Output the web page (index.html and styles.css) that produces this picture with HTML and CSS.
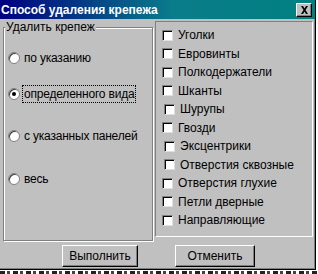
FILE: index.html
```html
<!DOCTYPE html>
<html lang="ru">
<head>
    <meta charset="UTF-8">
    <title>Способ удаления крепежа</title>
    <link rel="stylesheet" href="styles.css">
</head>
<body>
    <div class="window">
        <div class="titlebar">
            <span class="title">Способ удаления крепежа</span>
            <span class="close">
                <svg width="9" height="8" viewBox="0 0 9 8">
                    <path d="M1 0h2l1.5 2.5L6 0h2L5.5 4 8 8H6L4.5 5.5 3 8H1l2.5-4z" fill="#000"/>
                </svg>
            </span>
        </div>

        <div class="content">
            <div class="group">
                <div class="group-label">Удалить крепеж</div>
                <div class="radios">
                    <div class="radio-row"><span class="radio"></span><span>по указанию</span></div>
                    <div class="radio-row"><span class="radio checked"></span><span class="focus">определенного вида</span></div>
                    <div class="radio-row"><span class="radio"></span><span>с указанных панелей</span></div>
                    <div class="radio-row"><span class="radio"></span><span>весь</span></div>
                </div>
            </div>

            <div class="list">
                <div class="check-row"><span class="box"></span>Уголки</div>
                <div class="check-row"><span class="box"></span>Евровинты</div>
                <div class="check-row"><span class="box"></span>Полкодержатели</div>
                <div class="check-row"><span class="box"></span>Шканты</div>
                <div class="check-row shifted"><span class="box"></span>Шурупы</div>
                <div class="check-row"><span class="box"></span>Гвозди</div>
                <div class="check-row shifted"><span class="box"></span>Эксцентрики</div>
                <div class="check-row shifted"><span class="box"></span>Отверстия сквозные</div>
                <div class="check-row"><span class="box"></span>Отверстия глухие</div>
                <div class="check-row"><span class="box"></span>Петли дверные</div>
                <div class="check-row"><span class="box"></span>Направляющие</div>
            </div>
        </div>

        <div class="buttons">
            <button class="btn btn-run">Выполнить</button>
            <button class="btn btn-cancel">Отменить</button>
        </div>
    </div>
    <div class="below"></div>
</body>
</html>
```

FILE: styles.css
```css
body {
    margin: 0;
    background: #fff;
    font-family: 'Liberation Sans', Arial, sans-serif;
    font-size: 12px;
    color: #000;
    width: 318px;
    height: 274px;
    overflow: hidden;
}

.window {
    width: 316px;
    height: 270px;
    box-sizing: border-box;
    background: #c0c0c0;
    border-right: 1px solid #000;
    border-bottom: 1px solid #000;
    box-shadow: inset -1px -1px 0 #808080;
}

.titlebar {
    height: 19px;
    background: linear-gradient(to right, #000080, #0a7d8a 55%, #008080);
    display: flex;
    align-items: center;
    justify-content: space-between;
    padding: 0 3px 0 1px;
}

.title {
    color: #fff;
    font-weight: bold;
    font-size: 12px;
}

.close {
    width: 16px;
    height: 14px;
    box-sizing: border-box;
    background: #c0c0c0;
    border-top: 1px solid #fff;
    border-left: 1px solid #fff;
    border-right: 1px solid #000;
    border-bottom: 1px solid #000;
    box-shadow: inset -1px -1px 0 #808080;
    display: flex;
    align-items: center;
    justify-content: center;
}

.content {
    display: flex;
    gap: 2px;
    padding: 2px 2px 0 3px;
}

.group {
    width: 150px;
    height: 214px;
    box-sizing: border-box;
    border: 1px solid #808080;
    box-shadow: 1px 1px 0 #fff, inset 1px 1px 0 #fff;
    position: relative;
    margin-top: 6px;
}

.group-label {
    position: absolute;
    top: -7px;
    left: 1px;
    background: #c0c0c0;
    padding: 0 1px;
    line-height: 13px;
}

.radios {
    display: flex;
    flex-direction: column;
    padding: 23px 0 0 4px;
    letter-spacing: -0.2px;
}

.radio-row {
    display: flex;
    align-items: center;
    gap: 4px;
    height: 14px;
    margin-bottom: 22px;
}

.radio-row:nth-child(2) {
    margin-bottom: 28px;
}

.radio-row:nth-child(3) {
    margin-bottom: 29px;
}

.radio {
    width: 10px;
    height: 10px;
    border-radius: 50%;
    background: #fff;
    border: 1px solid #808080;
    box-shadow: inset 1px 1px 0 #404040;
    position: relative;
}

.radio.checked::after {
    content: '';
    position: absolute;
    left: 3px;
    top: 3px;
    width: 4px;
    height: 4px;
    border-radius: 50%;
    background: #000;
}

.focus {
    outline: 1px dotted #000;
    outline-offset: 1px;
}

.list {
    width: 158px;
    height: 216px;
    box-sizing: border-box;
    border-top: 1px solid #808080;
    border-left: 1px solid #808080;
    border-right: 1px solid #fff;
    border-bottom: 1px solid #fff;
    padding: 4px 0 0 6px;
}

.check-row {
    display: flex;
    align-items: center;
    gap: 5px;
    height: 18.5px;
}

.check-row.shifted {
    padding-left: 2px;
}

.box {
    width: 11px;
    height: 11px;
    box-sizing: border-box;
    background: #fff;
    border-top: 1px solid #808080;
    border-left: 1px solid #808080;
    border-right: 1px solid #dfdfdf;
    border-bottom: 1px solid #dfdfdf;
    box-shadow: inset 1px 1px 0 #000;
}

.buttons {
    display: flex;
    padding: 4px 0 0 62px;
    gap: 37px;
}

.btn {
    height: 22px;
    box-sizing: border-box;
    font-family: 'Liberation Sans', Arial, sans-serif;
    font-size: 12px;
    background: #c0c0c0;
    border-top: 1px solid #fff;
    border-left: 1px solid #fff;
    border-right: 1px solid #000;
    border-bottom: 1px solid #000;
    box-shadow: inset -1px -1px 0 #808080;
    padding: 0;
}

.btn-run {
    width: 76px;
}

.btn-cancel {
    width: 80px;
}

.below {
    height: 3px;
    margin-top: 1px;
    background: repeating-linear-gradient(to right, #222 0 5px, #fff 5px 7px, #444 7px 10px, #fff 10px 13px);
}
```
